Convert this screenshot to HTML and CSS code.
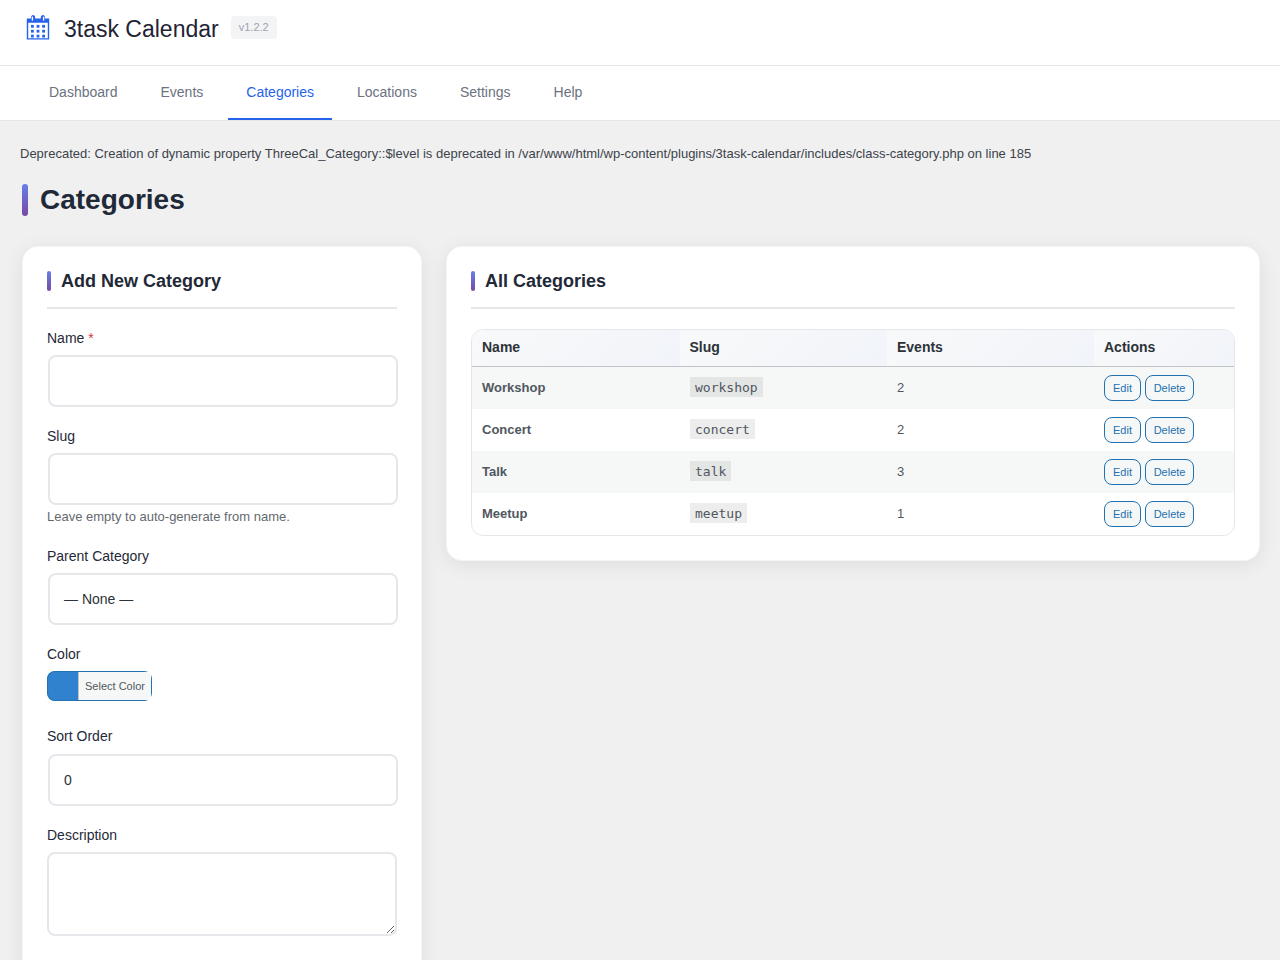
FILE: index.html
```html
<!DOCTYPE html>
<html lang="en">
<head>
    <meta charset="UTF-8">
    <meta name="viewport" content="width=device-width, initial-scale=1.0">
    <title>Categories - 3task Calendar</title>
    <link rel="stylesheet" href="styles.css">
</head>
<body>

<header class="app-header">
    <svg class="app-icon" width="28" height="28" viewBox="0 0 20 20" aria-hidden="true">
        <path fill="#2563eb" fill-rule="evenodd" d="M15 4h3v15H2V4h3V3c0-.41.15-.76.44-1.060.29-.29.65-.44 1.060-.44s.77.15 1.060.44c.29.3.44.65.44 1.060v1h4V3c0-.41.15-.76.44-1.060.29-.29.65-.44 1.060-.44s.77.15 1.060.44c.29.3.44.65.44 1.060v1zM6 5.500c.28 0 .5-.22.5-.5V3c0-.28-.22-.5-.5-.5s-.5.220-.5.5v2c0 .28.22.5.5.5zm7.500-.5c0 .28.22.5.5.5s.5-.22.5-.5V3c0-.28-.22-.5-.5-.5s-.5.220-.5.5v2zM17 18V7H3v11h14z"/>
        <g fill="#2563eb">
            <rect x="5" y="8.500" width="2" height="2"/><rect x="9" y="8.500" width="2" height="2"/><rect x="13" y="8.500" width="2" height="2"/>
            <rect x="5" y="12" width="2" height="2"/><rect x="9" y="12" width="2" height="2"/><rect x="13" y="12" width="2" height="2"/>
            <rect x="5" y="15.500" width="2" height="2"/><rect x="9" y="15.500" width="2" height="2"/><rect x="13" y="15.500" width="2" height="2"/>
        </g>
    </svg>
    <span class="app-title">3task Calendar</span>
    <span class="app-version">v1.2.2</span>
</header>

<nav class="app-nav">
    <a href="#">Dashboard</a>
    <a href="#">Events</a>
    <a href="#" class="active">Categories</a>
    <a href="#">Locations</a>
    <a href="#">Settings</a>
    <a href="#">Help</a>
</nav>

<main class="content">
    <p class="notice">Deprecated: Creation of dynamic property ThreeCal_Category::$level is deprecated in /var/www/html/wp-content/plugins/3task-calendar/includes/class-category.php on line 185</p>

    <h1 class="page-title">Categories</h1>

    <div class="columns">
        <section class="card">
            <h2 class="card-title">Add New Category</h2>
            <form>
                <div class="field">
                    <label for="cat-name">Name <span class="required">*</span></label>
                    <input type="text" id="cat-name">
                </div>
                <div class="field">
                    <label for="cat-slug">Slug</label>
                    <input type="text" id="cat-slug">
                    <p class="hint">Leave empty to auto-generate from name.</p>
                </div>
                <div class="field">
                    <label for="cat-parent">Parent Category</label>
                    <div class="select" id="cat-parent">— None —</div>
                </div>
                <div class="field field-color">
                    <label>Color</label>
                    <button type="button" class="color-button"><span class="swatch"></span><span class="color-text">Select Color</span></button>
                </div>
                <div class="field field-order">
                    <label for="cat-order">Sort Order</label>
                    <input type="text" id="cat-order" value="0">
                </div>
                <div class="field">
                    <label for="cat-desc">Description</label>
                    <textarea id="cat-desc"></textarea>
                </div>
            </form>
        </section>

        <section class="card card-list">
            <h2 class="card-title">All Categories</h2>
            <div class="table-wrap">
                <table>
                    <thead>
                    <tr>
                        <th class="col-name">Name</th>
                        <th class="col-slug">Slug</th>
                        <th class="col-events">Events</th>
                        <th>Actions</th>
                    </tr>
                    </thead>
                    <tbody>
                    <tr>
                        <td class="name">Workshop</td>
                        <td><code>workshop</code></td>
                        <td>2</td>
                        <td class="actions"><a href="#" class="btn">Edit</a><a href="#" class="btn">Delete</a></td>
                    </tr>
                    <tr>
                        <td class="name">Concert</td>
                        <td><code>concert</code></td>
                        <td>2</td>
                        <td class="actions"><a href="#" class="btn">Edit</a><a href="#" class="btn">Delete</a></td>
                    </tr>
                    <tr>
                        <td class="name">Talk</td>
                        <td><code>talk</code></td>
                        <td>3</td>
                        <td class="actions"><a href="#" class="btn">Edit</a><a href="#" class="btn">Delete</a></td>
                    </tr>
                    <tr>
                        <td class="name">Meetup</td>
                        <td><code>meetup</code></td>
                        <td>1</td>
                        <td class="actions"><a href="#" class="btn">Edit</a><a href="#" class="btn">Delete</a></td>
                    </tr>
                    </tbody>
                </table>
            </div>
        </section>
    </div>
</main>

</body>
</html>
```

FILE: styles.css
```css
* {
    box-sizing: border-box;
}

html, body {
    height: 960px;
    overflow: hidden;
}

body {
    margin: 0;
    background-color: #f0f0f1;
    font-family: "Liberation Sans", Arial, sans-serif;
    font-size: 13px;
    color: #3c434a;
}

/* header */
.app-header {
    height: 66px;
    padding: 0 0 8px 24px;
    display: flex;
    align-items: center;
    background-color: #fff;
    border-bottom: 1px solid #e5e7eb;
}

.app-icon {
    margin-right: 12px;
    margin-top: -3px;
}

.app-title {
    font-size: 23px;
    color: #1f2335;
    margin-right: 12px;
    margin-top: 1px;
}

.app-version {
    margin-top: -2px;
    padding: 4px 8px;
    font-size: 11px;
    line-height: 15px;
    color: #9ca3af;
    background-color: #f3f4f6;
    border-radius: 4px;
}

.app-nav {
    height: 55px;
    padding-left: 31px;
    display: flex;
    gap: 7px;
    background-color: #fff;
    border-bottom: 1px solid #e5e7eb;
}

.app-nav a {
    padding: 0 18px;
    height: 54px;
    line-height: 52px;
    font-size: 14px;
    color: #6b7280;
    text-decoration: none;
    border-bottom: 2px solid transparent;
}

.app-nav a.active {
    color: #2563eb;
    border-bottom-color: #2563eb;
}

/* content */
.content {
    padding: 0 20px 0 22px;
}

.notice {
    margin: 0 0 0 -2px;
    padding-top: 24px;
    line-height: 17px;
    color: #3c434a;
}

.page-title {
    margin: 22px 0 30px;
    padding-left: 18px;
    position: relative;
    font-size: 28px;
    line-height: 32px;
    font-weight: 700;
    color: #1f2937;
}

.page-title::before {
    content: "";
    position: absolute;
    left: 0;
    top: 0;
    width: 6px;
    height: 32px;
    border-radius: 3px;
    background: linear-gradient(180deg, #667eea, #764ba2);
}

.columns {
    display: grid;
    grid-template-columns: 400px 1fr;
    gap: 24px;
    align-items: start;
}

.card {
    padding: 24px;
    height: 800px;
    background-color: #fff;
    border: 1px solid rgba(0, 0, 0, 0.04);
    border-radius: 16px;
    box-shadow: 0 4px 20px rgba(0, 0, 0, 0.08);
}

.card-list {
    height: auto;
}

.card-title {
    margin: 0 0 20px;
    padding: 0 0 15px 14px;
    position: relative;
    font-size: 18px;
    line-height: 21px;
    font-weight: 700;
    color: #1f2937;
    border-bottom: 2px solid #e5e7eb;
}

.card-title::before {
    content: "";
    position: absolute;
    left: 0;
    top: 0;
    width: 4px;
    height: 20px;
    border-radius: 2px;
    background: linear-gradient(180deg, #667eea, #764ba2);
}

/* form */
.field {
    margin-bottom: 20px;
}

.field label {
    display: block;
    margin-bottom: 8px;
    font-size: 14px;
    line-height: 18px;
    color: #1f2937;
}

.required {
    color: #d63638;
}

.field input,
.field .select,
.field textarea {
    display: block;
    width: 350px;
    margin-left: 1px;
    padding: 0 14px;
    height: 52px;
    font-family: "Liberation Sans", Arial, sans-serif;
    font-size: 14px;
    line-height: 48px;
    color: #2c3338;
    background-color: #fff;
    border: 2px solid #e5e7eb;
    border-radius: 8px;
}

.field textarea {
    height: 84px;
    margin-left: 0;
    resize: vertical;
}

.hint {
    margin: 3px 0 0;
    padding-bottom: 1px;
    font-size: 13px;
    line-height: 18px;
    color: #646970;
}

.field-color {
    margin-bottom: 26px;
}

.field-order label {
    margin-bottom: 9px;
}

.color-button {
    display: flex;
    position: relative;
    width: 105px;
    height: 30px;
    padding: 0;
    background-color: #f6f7f7;
    border: 0;
    border-radius: 8px;
    overflow: hidden;
    font-family: "Liberation Sans", Arial, sans-serif;
}

/* the picker's outline stops short of the right corners */
.color-button::before {
    content: "";
    position: absolute;
    left: 0;
    top: 0;
    bottom: 0;
    width: 101px;
    border: 1px solid #2271b1;
    border-right: 0;
    border-radius: 8px 0 0 8px;
}

.color-button::after {
    content: "";
    position: absolute;
    right: 0;
    top: 4px;
    bottom: 4px;
    width: 1px;
    background-color: #2271b1;
}

.swatch {
    width: 32px;
    height: 100%;
    background-color: #3182ce;
    border-right: 1px solid #c3c4c7;
}

.color-text {
    flex: 1;
    padding-left: 6px;
    font-size: 11px;
    line-height: 30px;
    text-align: left;
    color: #50575e;
}

/* table */
.table-wrap {
    border: 1px solid #e5e7eb;
    border-radius: 12px;
    overflow: hidden;
}

table {
    width: 100%;
    border-collapse: separate;
    border-spacing: 0;
    table-layout: fixed;
}

th {
    height: 37px;
    padding: 0 10px 2px;
    font-size: 14px;
    font-weight: 700;
    text-align: left;
    color: #2c3338;
    background: linear-gradient(135deg, #f8f9fa, #f1f4f9);
    border-bottom: 1px solid #c3c4c7;
}

.col-name { width: 207.500px; }
.col-slug { width: 207.500px; }
.col-events { width: 207px; }

td {
    height: 42px;
    padding: 0 10px 2px;
    font-size: 13px;
    color: #50575e;
}

tbody tr:nth-child(odd) td {
    background-color: #f6f7f7;
}

td.name {
    font-weight: 700;
}

code {
    margin-left: 0.500px;
    padding: 3px 5px 2px;
    font-family: "DejaVu Sans Mono", monospace;
    font-size: 13px;
    color: #50575e;
    background-color: rgba(0, 0, 0, 0.07);
}

td.actions {
    padding: 0 10px;
    white-space: nowrap;
    font-size: 0;
}

.btn {
    display: inline-block;
    height: 26px;
    margin-right: 3.700px;
    padding: 0 8px;
    font-size: 11px;
    line-height: 24px;
    color: #2271b1;
    text-decoration: none;
    background-color: #f6f7f7;
    border: 1px solid #2271b1;
    border-radius: 8px;
}
```
